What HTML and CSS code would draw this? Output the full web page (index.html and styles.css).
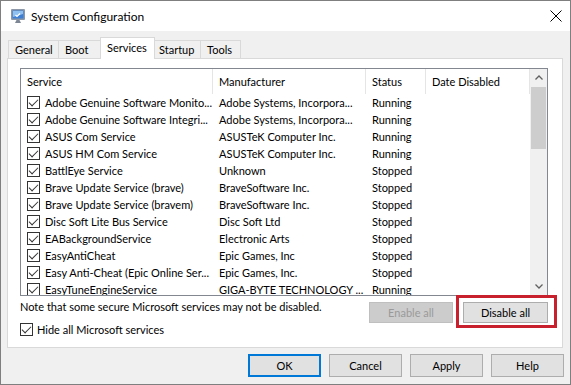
FILE: index.html
```html
<!DOCTYPE html>
<html lang="en">
<head>
    <meta charset="UTF-8">
    <title>System Configuration</title>
    <link rel="stylesheet" href="styles.css">
</head>
<body>
    <div class="window">
        <div class="titlebar">
            <svg class="app-icon" width="16" height="16" viewBox="0 0 16 16">
                <rect x="1" y="1" width="14" height="11" rx="1" fill="#8c98a8"/>
                <rect x="2.5" y="2.5" width="11" height="8" fill="#3d7fd4"/>
                <path d="M3 3h10v3L3 9z" fill="#8fc0f2"/>
                <path d="M5.5 7l1.5 1.5 3-3" stroke="#fff" stroke-width="1.2" fill="none"/>
                <path d="M5 15l1.5-3h3l1.5 3z" fill="#7d8694"/>
            </svg>
            <span class="title">System Configuration</span>
            <svg class="close" width="12" height="12" viewBox="0 0 12 12">
                <path d="M0.5 0.5l11 11M11.5 0.5l-11 11" stroke="#000" stroke-width="1"/>
            </svg>
        </div>

        <div class="tabs">
            <div class="tab tab-general">General</div>
            <div class="tab tab-boot">Boot</div>
            <div class="tab tab-services active">Services</div>
            <div class="tab tab-startup">Startup</div>
            <div class="tab tab-tools">Tools</div>
        </div>

        <div class="panel">
            <div class="list">
                <div class="table">
                    <div class="row header">
                        <div class="cell">Service</div>
                        <div class="cell">Manufacturer</div>
                        <div class="cell">Status</div>
                        <div class="cell">Date Disabled</div>
                    </div>
                    <div class="row"><div class="cell name"><span class="cb"></span>Adobe Genuine Software Monito...</div><div class="cell">Adobe Systems, Incorpora...</div><div class="cell">Running</div><div class="cell"></div></div>
                    <div class="row"><div class="cell name"><span class="cb"></span>Adobe Genuine Software Integri...</div><div class="cell">Adobe Systems, Incorpora...</div><div class="cell">Running</div><div class="cell"></div></div>
                    <div class="row"><div class="cell name"><span class="cb"></span>ASUS Com Service</div><div class="cell">ASUSTeK Computer Inc.</div><div class="cell">Running</div><div class="cell"></div></div>
                    <div class="row"><div class="cell name"><span class="cb"></span>ASUS HM Com Service</div><div class="cell">ASUSTeK Computer Inc.</div><div class="cell">Running</div><div class="cell"></div></div>
                    <div class="row"><div class="cell name"><span class="cb"></span>BattlEye Service</div><div class="cell">Unknown</div><div class="cell">Stopped</div><div class="cell"></div></div>
                    <div class="row"><div class="cell name"><span class="cb"></span>Brave Update Service (brave)</div><div class="cell">BraveSoftware Inc.</div><div class="cell">Stopped</div><div class="cell"></div></div>
                    <div class="row"><div class="cell name"><span class="cb"></span>Brave Update Service (bravem)</div><div class="cell">BraveSoftware Inc.</div><div class="cell">Stopped</div><div class="cell"></div></div>
                    <div class="row"><div class="cell name"><span class="cb"></span>Disc Soft Lite Bus Service</div><div class="cell">Disc Soft Ltd</div><div class="cell">Stopped</div><div class="cell"></div></div>
                    <div class="row"><div class="cell name"><span class="cb"></span>EABackgroundService</div><div class="cell">Electronic Arts</div><div class="cell">Stopped</div><div class="cell"></div></div>
                    <div class="row"><div class="cell name"><span class="cb"></span>EasyAntiCheat</div><div class="cell">Epic Games, Inc</div><div class="cell">Stopped</div><div class="cell"></div></div>
                    <div class="row"><div class="cell name"><span class="cb"></span>Easy Anti-Cheat (Epic Online Ser...</div><div class="cell">Epic Games, Inc.</div><div class="cell">Stopped</div><div class="cell"></div></div>
                    <div class="row"><div class="cell name"><span class="cb"></span>EasyTuneEngineService</div><div class="cell">GIGA-BYTE TECHNOLOGY ...</div><div class="cell">Running</div><div class="cell"></div></div>
                </div>
                <div class="scrollbar">
                    <div class="arrow">
                        <svg width="8" height="5" viewBox="0 0 8 5"><path d="M0.5 4.5L4 1l3.5 3.5" stroke="#606060" stroke-width="1.3" fill="none"/></svg>
                    </div>
                    <div class="track">
                        <div class="thumb"></div>
                    </div>
                    <div class="arrow">
                        <svg width="8" height="5" viewBox="0 0 8 5"><path d="M0.5 0.5L4 4l3.5-3.5" stroke="#606060" stroke-width="1.3" fill="none"/></svg>
                    </div>
                </div>
            </div>

            <div class="actions">
                <div class="notes">
                    <div class="note">Note that some secure Microsoft services may not be disabled.</div>
                    <label class="hide"><span class="cb"></span>Hide all Microsoft services</label>
                </div>
                <div class="action-buttons">
                    <button class="btn disabled">Enable all</button>
                    <div class="highlight">
                        <button class="btn">Disable all</button>
                    </div>
                </div>
            </div>
        </div>

        <div class="footer">
            <button class="btn dialog default">OK</button>
            <button class="btn dialog">Cancel</button>
            <button class="btn dialog">Apply</button>
            <button class="btn dialog">Help</button>
        </div>
    </div>
</body>
</html>
```

FILE: styles.css
```css
body {
    margin: 0;
    font-family: Lato, "Liberation Sans", sans-serif;
    font-size: 11px;
    color: #000;
}
.window {
    width: 571px;
    height: 385px;
    box-sizing: border-box;
    border: 1px solid #7f7f7f;
    background-color: #f0f0f0;
    display: flex;
    flex-direction: column;
}
.titlebar {
    height: 30px;
    background: #fff;
    display: flex;
    align-items: center;
    padding: 0 10px 0 9px;
}
.app-icon {
    margin-right: 5px;
}
.title {
    flex: 1;
    font-size: 12px;
}
.close {
    margin-right: -2px;
}
.tabs {
    height: 27px;
    display: flex;
    align-items: flex-end;
    padding-left: 7px;
}
.tab {
    height: 18px;
    box-sizing: border-box;
    border: 1px solid #d9d9d9;
    border-bottom: none;
    margin-left: -1px;
    background: #f0f0f0;
    line-height: 18px;
    padding-left: 6px;
}
.tab:first-child {
    margin-left: 0;
}
.tab.active {
    height: 22px;
    background: #fff;
    margin-bottom: -1px;
    position: relative;
    line-height: 20px;
    padding-left: 6px;
}
.tab-general { width: 51px; }
.tab-boot { width: 43px; }
.tab-services { width: 55px; }
.tab-startup { width: 47px; padding-left: 4px; }
.tab-tools { width: 41px; }

.panel {
    width: 556px;
    height: 290px;
    box-sizing: border-box;
    margin-left: 6px;
    background: #fff;
    border: 1px solid #d9d9d9;
    padding: 9px 14px 0 12px;
}
.list {
    height: 228px;
    box-sizing: border-box;
    border: 1px solid #828790;
    display: flex;
    overflow: hidden;
}
.table {
    flex: 1;
    overflow: hidden;
}
.row {
    display: grid;
    grid-template-columns: 192px 153px 60px 1fr;
    height: 17px;
    line-height: 17px;
}
.row.header {
    height: 25px;
    line-height: 25px;
}
.header .cell {
    border-right: 1px solid #e5e5e5;
    padding-left: 6px;
}
.cell {
    white-space: nowrap;
    overflow: hidden;
    padding-left: 6px;
}
.cell.name {
    display: flex;
    align-items: center;
}
.cb {
    width: 13px;
    height: 13px;
    box-sizing: border-box;
    border: 1px solid #333;
    background: #fff;
    position: relative;
    flex: none;
    margin-right: 5px;
}
.cb::after {
    content: "";
    position: absolute;
    left: 3px;
    top: 0px;
    width: 4px;
    height: 8px;
    border: solid #333;
    border-width: 0 1px 1px 0;
    transform: rotate(45deg);
}
.scrollbar {
    width: 17px;
    background: #f0f0f0;
    display: flex;
    flex-direction: column;
}
.arrow {
    height: 17px;
    display: flex;
    align-items: center;
    justify-content: center;
}
.track {
    flex: 1;
    padding: 1px;
}
.thumb {
    height: 62px;
    background: #cdcdcd;
}

.actions {
    display: flex;
    justify-content: space-between;
    align-items: flex-start;
    margin-top: 3px;
}
.note {
    line-height: 15px;
}
.hide {
    display: flex;
    align-items: center;
    margin-top: 9px;
}
.hide .cb {
    margin-right: 4px;
}
.action-buttons {
    display: flex;
    gap: 10px;
    margin-top: 3px;
}
.btn {
    font-family: Lato, "Liberation Sans", sans-serif;
    font-size: 11px;
    color: #000;
    height: 21px;
    padding: 0;
    background: #e1e1e1;
    border: 1px solid #adadad;
    border-radius: 0;
}
.action-buttons .btn {
    width: 85px;
}
.btn.disabled {
    width: 84px;
    background: #cccccc;
    border-color: #bfbfbf;
    color: #9a9a9a;
}
.highlight {
    position: relative;
}
.highlight::after {
    content: "";
    position: absolute;
    left: -7px;
    right: -9px;
    top: -7px;
    bottom: -5px;
    border: 3px solid #c8202c;
}
.footer {
    display: flex;
    justify-content: flex-end;
    gap: 8px;
    padding: 6px 6px 0 0;
}
.btn.dialog {
    width: 73px;
    height: 23px;
}
.btn.default {
    border: 2px solid #0078d7;
}
```
